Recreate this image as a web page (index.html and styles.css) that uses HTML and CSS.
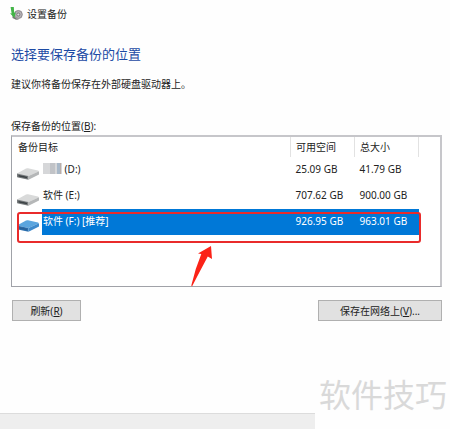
FILE: index.html
```html
<!DOCTYPE html>
<html lang="zh-CN">
<head>
<meta charset="utf-8">
<meta name="viewport" content="width=device-width, initial-scale=1">
<title>设置备份</title>
<link rel="stylesheet" href="styles.css">
</head>
<body>
<svg class="defs" aria-hidden="true">
  <symbol id="drive" viewBox="0 0 22 12">
    <path fill="var(--top)" d="M0 5.5 9 .5Q10 0 11 .2L21 2.5Q22 3 21.5 3.5L11.5 8Z"/>
    <path fill="var(--front)" d="M0 5.5 11.5 8V11.7L1 9.6Q0 9.3 0 8.5Z"/>
    <path fill="var(--side)" d="M11.5 8 22 3.2V6.4L11.5 11.7Z"/>
    <path fill="var(--slot)" d="M1.5 7 10 8.8V10.3L1.5 8.5Z"/>
  </symbol>
</svg>
<header class="titlebar">
  <svg class="app-icon" viewBox="0 0 13 14" aria-hidden="true">
    <path d="M2.5 6 5 10.5 9 12.5 6 12.8 2.5 11Z" fill="#777"/>
    <circle cx="8.3" cy="7.5" r="4" fill="#b4b0b4" stroke="#8f8a8f"/>
    <circle cx="8.3" cy="7.5" r="1.5" fill="#ddd" stroke="#7c787e"/>
    <path d="M.6 0H3.8L4.2 6 5.8 5.2 4.4 11 0 6.2 1.6 6.6Z" fill="#43b548"/>
  </svg>
  <span>设置备份</span>
</header>
<main class="content">
  <h1>选择要保存备份的位置</h1>
  <p class="hint">建议你将备份保存在外部硬盘驱动器上。</p>
  <p class="list-label" id="list-label">保存备份的位置(<u>B</u>):</p>
  <div class="list">
    <table aria-labelledby="list-label">
      <colgroup><col class="col-icon"><col><col class="col-size"><col class="col-size"></colgroup>
      <thead>
        <tr><th colspan="2">备份目标</th><th>可用空间</th><th>总大小</th></tr>
      </thead>
      <tbody>
        <tr>
          <td class="icon"><svg class="drive"><use href="#drive"/></svg></td>
          <td class="name"><svg class="mosaic" viewBox="0 0 19 11" aria-hidden="true"><path fill="#d6d7d9" d="M0 0h19v11H0z"/><path fill="#c1c3c7" d="M7 0h5v11H7z"/><path fill="#a8b8c8" d="M14 0h3v11h-3z"/><path fill="#bcaea8" d="M17 0h1v11h-1z"/></svg> (D:)</td>
          <td>25.09 GB</td><td>41.79 GB</td>
        </tr>
        <tr>
          <td class="icon"><svg class="drive"><use href="#drive"/></svg></td>
          <td class="name">软件 (E:)</td>
          <td>707.62 GB</td><td>900.00 GB</td>
        </tr>
        <tr class="selected">
          <td class="icon"><svg class="drive drive-blue"><use href="#drive"/></svg></td>
          <td class="name">软件 (F:) [推荐]</td>
          <td>926.95 GB</td><td>963.01 GB</td>
        </tr>
      </tbody>
    </table>
    <div class="highlight"></div>
    <svg class="arrow" viewBox="0 0 22 41" aria-hidden="true"><path d="M20 0 21 13 16.8 10.5Q9 25 1 40.5L.3 39.5Q4 23 10.3 8L7 7.5Z" fill="#fb2318"/></svg>
  </div>
  <div class="actions">
    <button type="button" class="refresh">刷新(<u>R</u>)</button>
    <button type="button" class="network">保存在网络上(<u>V</u>)...</button>
  </div>
</main>
<footer class="footer"></footer>
<div class="watermark">软件技巧</div>
</body>
</html>
```
FILE: styles.css
```css
* { box-sizing: border-box; }

body {
  position: relative;
  display: flex;
  flex-direction: column;
  min-height: 100vh;
  margin: 0;
  background: #fefefe;
  color: #222;
  font: 10px/16px "Noto Sans", "Noto Sans CJK SC", sans-serif;
}

.defs { position: absolute; width: 0; height: 0; }

.titlebar {
  display: flex;
  align-items: center;
  gap: 4px;
  padding: 6px 10px;
}

.app-icon { width: 13px; height: 14px; }

.content { padding: 0 8px 0 11px; }

h1 {
  margin: 16px 0 0;
  color: #1c4aa4;
  font-size: 13px;
  font-weight: 400;
  line-height: 20px;
}

.hint { margin: 12px 0 0; }

.list-label { margin: 26px 0 0; }

.list {
  position: relative;
  height: 152px;
  margin-top: 1px;
  padding-right: 21px;
  border: 1px solid #a0a2a8;
  border-top: 2px solid #c6c6ca;
  border-right: 2px solid #c6c6ca;
  background: #fff;
}

table {
  width: 100%;
  border-collapse: collapse;
  table-layout: fixed;
}

.col-icon { width: 30px; }
.col-size { width: 64px; }

th {
  height: 20px;
  padding: 0 0 0 5px;
  border-right: 1px solid #e2e2e2;
  font-weight: 400;
  text-align: left;
}

th:first-child { padding-left: 6px; }

td {
  height: 26px;
  padding: 0 0 2px 5px;
  white-space: nowrap;
}

td.icon { padding: 8px 0 0 5px; }
td.name { padding-left: 1px; }

.selected td:not(.icon) {
  background: #0078d7;
  color: #fff;
}

.drive {
  --top: #d9dada;
  --front: #777b7d;
  --side: #b5b7b8;
  --slot: #3b4144;
  display: block;
  width: 22px;
  height: 12px;
}

.drive-blue {
  --top: #5ba5de;
  --front: #2b6fae;
  --side: #3f8acb;
  --slot: #2a6096;
}

.mosaic { width: 19px; height: 11px; vertical-align: -1px; }

.highlight {
  position: absolute;
  top: 75px;
  right: 19px;
  left: 5px;
  height: 31px;
  border: 2px solid #e92b2b;
  border-radius: 3px;
}

.arrow {
  position: absolute;
  top: 109px;
  left: 179px;
  width: 22px;
  height: 41px;
}

.actions {
  display: flex;
  justify-content: space-between;
  margin-top: 13px;
  padding-left: 1px;
}

button {
  height: 21px;
  padding: 0;
  border: 1px solid #b0b0b0;
  background: #e1e1e1;
  color: inherit;
  font: inherit;
}

.refresh { width: 69px; }
.network { width: 124px; }

.footer {
  height: 16px;
  margin: auto 135px 0 0;
  border-top: 1px solid #dcdcdc;
  background: #eee;
}

.watermark {
  position: absolute;
  right: 3px;
  bottom: 14px;
  color: #d9d9d9;
  font-size: 32px;
  line-height: 40px;
}
```
